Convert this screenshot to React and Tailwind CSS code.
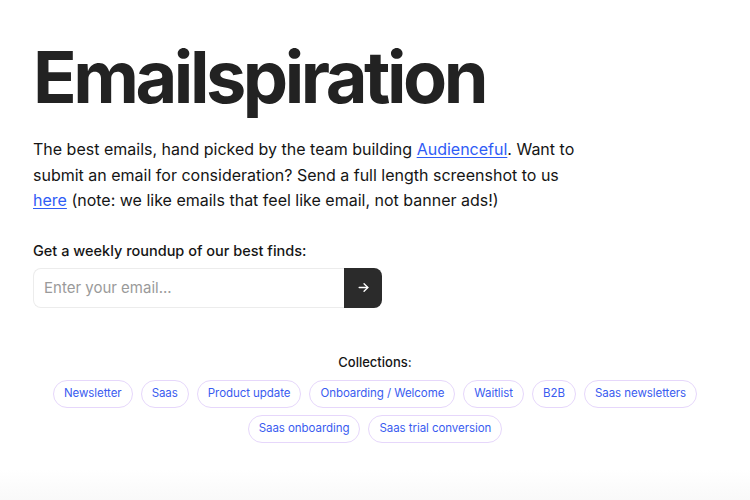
import React from "react";

const pills1 = ["Newsletter", "Saas", "Product update", "Onboarding / Welcome", "Waitlist", "B2B", "Saas newsletters"];
const pills2 = ["Saas onboarding", "Saas trial conversion"];

function Pill({ label }) {
  return (
    <a className="mr-2 mb-[7px] inline-flex h-7 items-center rounded-full border border-[#e6d7fb] px-[10px] text-[11.5px] tracking-[-0.005em] text-[#3a5cf0]">
      {label}
    </a>
  );
}

export default function App() {
  return (
    <div
      className="relative min-h-[500px] w-full overflow-hidden bg-white text-[#151515]"
      style={{ fontFamily: "Inter, 'Noto Sans', sans-serif" }}
    >
      <div className="px-[33px] pt-[41px]">
        <h1 className="text-[72px] font-bold leading-none tracking-[-0.048em] text-[#222]">Emailspiration</h1>
        <p className="mt-[24px] max-w-[555px] text-[16px] leading-[25.5px]">
          The best emails, hand picked by the team building{" "}
          <a className="text-[#2f5cf6] underline underline-offset-2">Audienceful</a>. Want to submit an email for
          consideration? Send a full length screenshot to us{" "}
          <a className="text-[#2f5cf6] underline underline-offset-2">here</a> (note: we like emails that feel like
          email, not banner ads!)
        </p>
        <div className="mt-[26px] text-[14.5px] font-medium leading-[22px]">Get a weekly roundup of our best finds:</div>
        <div className="mt-1.5 flex h-10 w-[349px]">
          <input
            className="h-10 w-[311px] rounded-l-lg border border-r-0 border-[#ececec] px-2.5 text-[15px] placeholder:text-[#9a9a9a] outline-none"
            placeholder="Enter your email..."
          />
          <button className="flex h-10 w-[38px] items-center justify-center rounded-r-lg bg-[#2b2b2b] text-white">
            <svg width="13" height="13" viewBox="0 0 24 24" fill="none" stroke="currentColor" strokeWidth="2.5" strokeLinecap="round" strokeLinejoin="round">
              <path d="M4 12h16" />
              <path d="M13 5l7 7-7 7" />
            </svg>
          </button>
        </div>
      </div>
      <div className="mt-[44px] flex flex-col items-center">
        <div className="text-[13px] font-medium leading-5">Collections:</div>
        <div className="mt-2 flex w-[720px] flex-wrap justify-center pl-2">
          {pills1.map((p) => (
            <Pill key={p} label={p} />
          ))}
        </div>
        <div className="flex w-[720px] flex-wrap justify-center pl-2">
          {pills2.map((p) => (
            <Pill key={p} label={p} />
          ))}
        </div>
      </div>
      <div className="absolute bottom-0 left-0 right-0 h-[30px] bg-gradient-to-b from-white to-[#f9f9f9]" />
    </div>
  );
}
